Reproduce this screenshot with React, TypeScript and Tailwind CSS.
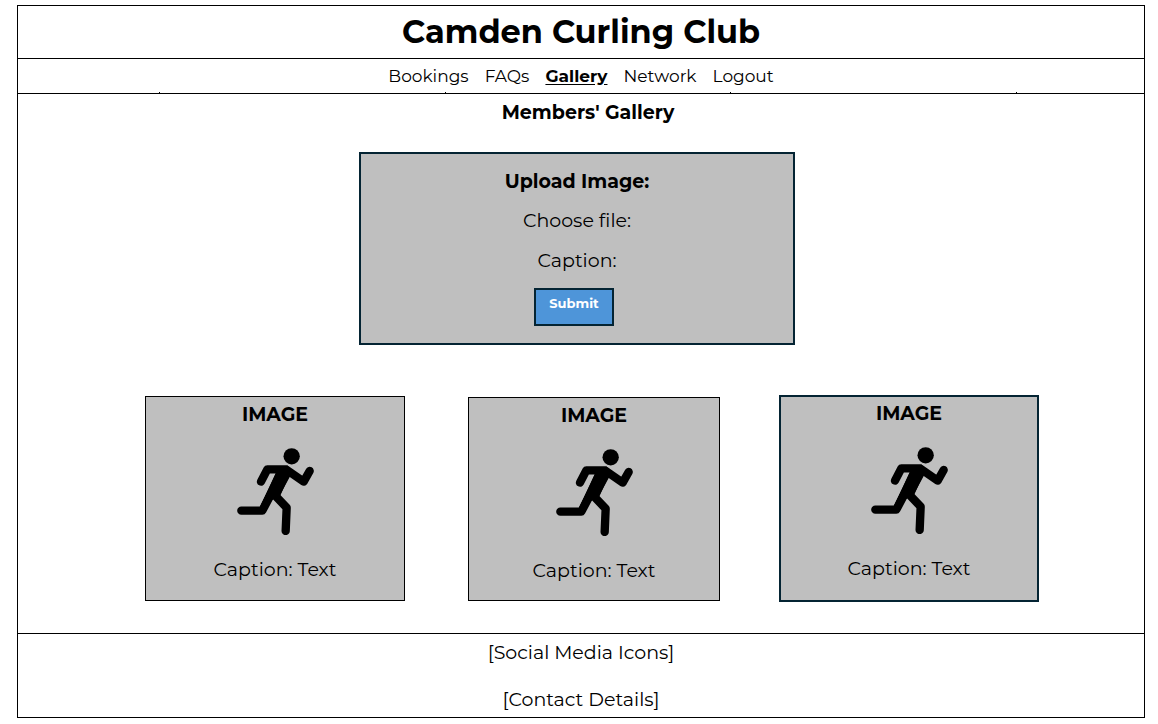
import React from "react";

const navItems = ["Bookings", "FAQs", "Gallery", "Network", "Logout"];

const cards = [
  { id: 1, frame: "w-[260px] h-[205px] border border-black mt-px mr-[63px] pt-1" },
  { id: 2, frame: "w-[252px] h-[204px] border border-black mt-[2px] mr-[59px] pt-1" },
  { id: 3, frame: "w-[260px] h-[207px] border-2 border-[#042433] pt-[3px]" },
];

function Runner() {
  return (
    <svg
      viewBox="21 23 231 261"
      className="h-[87px] w-[77px]"
      fill="none"
      stroke="black"
      strokeWidth="25"
      strokeLinecap="round"
      strokeLinejoin="round"
      aria-hidden="true"
    >
      <circle cx="185" cy="48" r="24.5" fill="black" stroke="none" />
      <path d="M93 124 112 87H168L221 124 239 92" />
      <path d="M34 211H97L128 152" />
      <path d="M130 160 170 202 167 272" />
      <path d="M139 95 172 75 186 97 148 168 130 176 90 202Z" fill="black" stroke="none" />
      <path d="M176 110 150 168 123 179 97 211 88 202 139 95Z" fill="black" stroke="none" />
    </svg>
  );
}

export default function App() {
  return (
    <div className="bg-white pt-[5px] pr-[13px] pb-[6px] pl-[17px] font-['Montserrat','Inter',sans-serif] text-black">
      <div className="border border-black">
        <header>
          <h1 className="flex h-[52px] items-center justify-center text-[32px] font-bold">
            Camden Curling Club
          </h1>
          <nav className="flex h-[34px] items-center justify-center gap-4 border-t border-black pt-0.5 text-[17px]">
            {navItems.map((item) => (
              <a
                key={item}
                href="#"
                className={item === "Gallery" ? "font-bold underline underline-offset-2" : ""}
              >
                {item}
              </a>
            ))}
          </nav>
          <div className="flex h-px justify-between pr-[127px] pl-[141px]" aria-hidden="true">
            <span className="w-px bg-black" />
            <span className="w-px bg-black" />
            <span className="w-px bg-black" />
            <span className="w-px bg-black" />
          </div>
        </header>

        <main className="h-[540px] border-t border-black">
          <h2 className="pt-[5px] pl-[14px] text-center text-[19px] leading-7 font-bold">
            Members' Gallery
          </h2>
          <div className="pr-2">
            <form
              onSubmit={(e) => e.preventDefault()}
              className="mx-auto mt-[25px] flex h-[193px] w-[436px] flex-col items-center border-2 border-[#042433] bg-[#bfbfbf] pt-[14px] text-[19px]"
            >
              <h3 className="leading-7 font-bold">Upload Image:</h3>
              <label className="mt-[11px] leading-7">
                Choose file:
                <input type="file" className="sr-only" />
              </label>
              <label className="mt-3 leading-7">
                Caption:
                <input type="text" className="sr-only" />
              </label>
              <button
                type="submit"
                className="mt-[13px] mr-[6px] flex h-[38px] w-20 justify-center border-2 border-[#042433] bg-[#4e95d9] pt-1 text-[13px] leading-[18px] font-bold text-white"
              >
                Submit
              </button>
            </form>
          </div>
          <section className="mt-[50px] flex items-start justify-center pl-[22px]">
            {cards.map((card) => (
              <figure
                key={card.id}
                className={`flex flex-col items-center bg-[#bfbfbf] text-[19px] ${card.frame}`}
              >
                <h3 className="leading-7 font-bold">IMAGE</h3>
                <div className="mt-[19px]">
                  <Runner />
                </div>
                <figcaption className="mt-[21px] leading-7">Caption: Text</figcaption>
              </figure>
            ))}
          </section>
        </main>

        <footer className="flex h-[84px] flex-col items-center gap-[19px] border-t border-black pt-[5px] text-[19px] leading-7">
          <p>[Social Media Icons]</p>
          <p>[Contact Details]</p>
        </footer>
      </div>
    </div>
  );
}
